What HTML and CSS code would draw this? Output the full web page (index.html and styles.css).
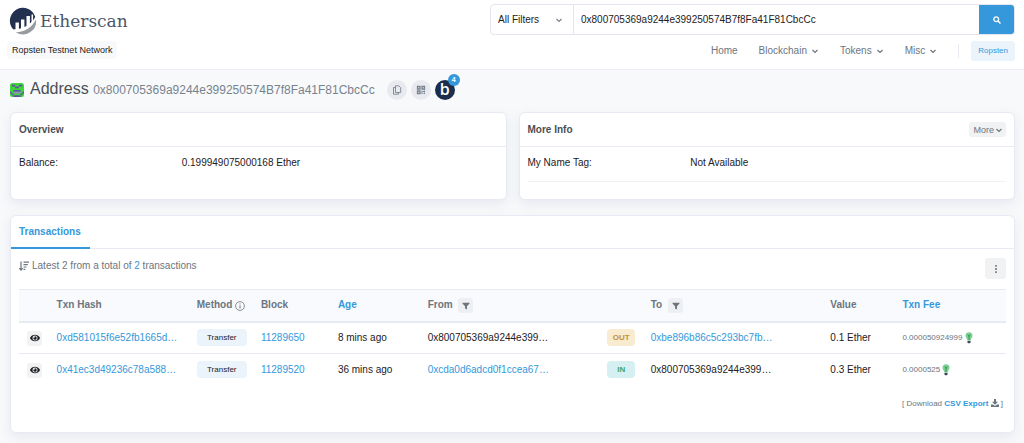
FILE: index.html
```html
<!DOCTYPE html>
<html lang="en">
<head>
<meta charset="utf-8">
<meta name="viewport" content="width=device-width, initial-scale=1">
<title>Etherscan - Address</title>
<link rel="stylesheet" href="styles.css">
</head>
<body>
<svg class="sprite" aria-hidden="true">
  <symbol id="chevron" viewBox="0 0 8 8"><path d="M1.500 3 4 5.500 6.500 3" fill="none" stroke="currentColor" stroke-width="1.200"/></symbol>
  <symbol id="eye" viewBox="0 0 576 512"><path fill="currentColor" fill-rule="evenodd" d="M572 241C518 135 410 64 288 64S58 135 4 241a32 32 0 0 0 0 30c54 106 162 177 284 177s230-71 284-177a32 32 0 0 0 0-30zM288 400a144 144 0 1 1 0-288 144 144 0 0 1 0 288zm0-240a96 96 0 0 0-25 4 48 48 0 0 1-67 67 96 96 0 1 0 92-71z"/></symbol>
  <symbol id="filter" viewBox="0 0 10 10"><path fill="currentColor" d="M.6.8h8.800v1L6.200 5.200V9.500L3.800 8.200v-3L.6 1.800z"/></symbol>
  <symbol id="bulb" viewBox="0 0 8 12"><path fill="#7fcf95" d="M4 .3a3.500 3.500 0 0 1 3.500 3.500c0 1.900-1.500 2.600-1.800 4.400H2.300C2 6.400.5 5.700.5 3.800A3.500 3.500 0 0 1 4 .3z"/><path fill="none" stroke="#2f9e55" stroke-width="1" d="M4 8V4.200M2.800 2.500l1.200 2 1.200-2"/><path fill="#34495e" d="M2.500 8.800h3v1.400L4.700 11.300H3.300l-.8-1.100z"/></symbol>
</svg>

<header class="header">
  <div class="brand">
    <a class="logo" href="#">
      <svg class="logo-mark" viewBox="0 0 28 28" aria-hidden="true">
        <path fill="#21314f" d="M4.200 22.500A13 13 0 1 1 26.300 10c-4 7.500-12 12-22.100 12.500z"/>
        <path fill="#fff" d="M6.500 15.500h3.400V24H6.500zM12 12.500h3.400v10H12zM17.500 9h3.400v11h-3.400zM22.500 7.500h1.600v9h-1.600z"/>
        <path fill="none" stroke="#fff" stroke-width="1.500" d="M3.500 23.500C14 23.500 23 19 27.200 10.500"/>
        <path fill="#979a9e" d="M27 12.500A13.100 13.100 0 0 1 6.800 25.200C16 25 23 20.500 27 12.500z"/>
      </svg>
      <span>Etherscan</span>
    </a>
    <span class="network">Ropsten Testnet Network</span>
  </div>
  <div class="header-main">
    <form class="search">
      <div class="filter-box">
        <select class="filter-select" aria-label="Search filter"><option>All Filters</option></select>
        <svg class="icon-8" aria-hidden="true"><use href="#chevron"/></svg>
      </div>
      <input class="search-input" type="text" aria-label="Search" value="0x800705369a9244e399250574B7f8Fa41F81CbcCc">
      <button class="search-button" type="button" aria-label="Submit search">
        <svg class="icon-8" viewBox="0 0 8 8" aria-hidden="true"><circle cx="3.200" cy="3.200" r="2.400" fill="none" stroke="#fff" stroke-width="1.300"/><path d="M5 5l2.500 2.500" stroke="#fff" stroke-width="1.500"/></svg>
      </button>
    </form>
    <nav class="nav">
      <a href="#">Home</a>
      <a href="#">Blockchain <svg class="icon-8" aria-hidden="true"><use href="#chevron"/></svg></a>
      <a href="#">Tokens <svg class="icon-8" aria-hidden="true"><use href="#chevron"/></svg></a>
      <a href="#">Misc <svg class="icon-8" aria-hidden="true"><use href="#chevron"/></svg></a>
      <div class="nav-end"><span class="divider"></span><a class="nav-network" href="#">Ropsten</a></div>
    </nav>
  </div>
</header>

<main class="main">
  <div class="title">
    <svg class="identicon" viewBox="0 0 8 8" aria-hidden="true"><rect width="8" height="8" rx="1.500" fill="#3fd43a"/><path fill="#5b4fa8" d="M1 1h2v1H1zM5 1h2v1H5zM3 2h2v1H3zM0 5h1v1H0zM7 5h1v1H7zM2 4h4v1H2zM1 6h1v1H1zM6 6h1v1H6zM2 7h4v1H2z"/><path fill="#8d93b8" d="M2 5h4v1H2z"/></svg>
    <h1 class="title-text">Address <small class="address">0x800705369a9244e399250574B7f8Fa41F81CbcCc</small></h1>
    <div class="title-actions">
      <button class="round" type="button" aria-label="Copy address"><svg class="icon-10" viewBox="0 0 10 10" fill="none" stroke="#77838f" aria-hidden="true"><path d="M3.500.8h3.200l2 2v4.700H3.500zM3.500 2.500H1.500v6.700h5V7.500" stroke-width=".9"/></svg></button>
      <button class="round" type="button" aria-label="Show QR code"><svg class="icon-10" viewBox="0 0 10 10" fill="none" stroke="#77838f" aria-hidden="true"><path stroke-width="1.300" d="M1.500 1.500h2.500v2.500H1.500zM6 1.500h2.500v2.500H6zM1.500 6h2.500v2.500H1.500z"/><path d="M6 5.500v3.500M8.500 5.500v2M7 6.500h2M7.500 8.500H9"/></svg></button>
      <a class="blockscan" href="#">b<span class="badge">4</span></a>
    </div>
  </div>

  <div class="cards">
    <section class="card">
      <div class="card-header"><h2>Overview</h2></div>
      <dl class="card-body"><div class="pair"><dt>Balance:</dt><dd>0.199949075000168 Ether</dd></div></dl>
    </section>
    <section class="card">
      <div class="card-header"><h2>More Info</h2><button class="more" type="button">More <svg class="icon-8" aria-hidden="true"><use href="#chevron"/></svg></button></div>
      <dl class="card-body"><div class="pair pair-ruled"><dt>My Name Tag:</dt><dd>Not Available</dd></div></dl>
    </section>
  </div>

  <section class="card">
    <div class="tabs"><a class="tab" href="#">Transactions</a></div>
    <div class="tx-body">
      <div class="tx-summary">
        <p class="tx-count"><svg class="icon-10" viewBox="0 0 10 10" fill="none" stroke="currentColor" aria-hidden="true"><path d="M2 .5v8.500M.4 7.200 2 9l1.600-1.800M4.500 1.200H10M4.500 3.600h4.300M4.500 6h3M4.500 8.400h1.700" stroke-width="1.200"/></svg>Latest 2 from a total of <a href="#">2</a> transactions</p>
        <button class="menu" type="button" aria-label="Table options"><svg class="icon-8" viewBox="0 0 8 8" fill="currentColor" aria-hidden="true"><path d="M3.200 0h1.600v1.800H3.200zM3.200 3.100h1.600v1.800H3.200zM3.200 6.200h1.600V8H3.200z"/></svg></button>
      </div>
      <table class="table">
        <colgroup><col class="c-view"><col class="c-hash"><col class="c-method"><col class="c-block"><col class="c-age"><col class="c-address"><col class="c-direction"><col class="c-address"><col class="c-value"><col></colgroup>
        <thead><tr>
          <th></th><th>Txn Hash</th>
          <th>Method <svg class="icon-10" viewBox="0 0 10 10" fill="none" stroke="currentColor" aria-hidden="true"><circle cx="5" cy="5" r="4.400" stroke-width=".8"/><path d="M5 4.300v3.200M5 2.400v1"/></svg></th>
          <th>Block</th><th><a href="#">Age</a></th>
          <th>From <button class="tool" type="button" aria-label="Filter by sender"><svg class="icon-8" aria-hidden="true"><use href="#filter"/></svg></button></th>
          <th></th>
          <th>To <button class="tool" type="button" aria-label="Filter by recipient"><svg class="icon-8" aria-hidden="true"><use href="#filter"/></svg></button></th>
          <th>Value</th><th><a href="#">Txn Fee</a></th>
        </tr></thead>
        <tbody>
          <tr>
            <td><button class="tool tool-dark" type="button" aria-label="View transaction"><svg class="icon-10" aria-hidden="true"><use href="#eye"/></svg></button></td>
            <td><a href="#">0xd581015f6e52fb1665d…</a></td><td><span class="tag tag-method">Transfer</span></td>
            <td><a href="#">11289650</a></td><td>8 mins ago</td><td>0x800705369a9244e399…</td>
            <td><span class="tag tag-out">OUT</span></td><td><a href="#">0xbe896b86c5c293bc7fb…</a></td>
            <td>0.1 Ether</td><td class="fee">0.000050924999 <svg class="bulb" aria-hidden="true"><use href="#bulb"/></svg></td>
          </tr>
          <tr>
            <td><button class="tool tool-dark" type="button" aria-label="View transaction"><svg class="icon-10" aria-hidden="true"><use href="#eye"/></svg></button></td>
            <td><a href="#">0x41ec3d49236c78a588…</a></td><td><span class="tag tag-method">Transfer</span></td>
            <td><a href="#">11289520</a></td><td>36 mins ago</td><td><a href="#">0xcda0d6adcd0f1ccea67…</a></td>
            <td><span class="tag tag-in">IN</span></td><td>0x800705369a9244e399…</td>
            <td>0.3 Ether</td><td class="fee">0.0000525 <svg class="bulb" aria-hidden="true"><use href="#bulb"/></svg></td>
          </tr>
        </tbody>
      </table>
      <p class="export">[ Download <a href="#">CSV Export</a> <svg class="icon-8" viewBox="0 0 8 8" aria-hidden="true"><path fill="currentColor" d="M3 0h2v2.800h2L4 5.800 1 2.800h2zM0 5.500h2l2 1.600 2-1.600h2V8H0z"/></svg> ]</p>
    </div>
  </section>
</main>
</body>
</html>
```
FILE: styles.css
```css
* { box-sizing: border-box; }
body {
  margin: 0;
  background: #f8f9fa;
  color: #1e2022;
  font: 10px/16px "Liberation Sans", Arial, sans-serif;
}
a { color: #3498db; text-decoration: none; }
h1, h2, p, dl, dd { margin: 0; }
button, input, select { font: inherit; color: inherit; border: 0; padding: 0; }
.sprite { display: none; }
.icon-8 { width: 8px; height: 8px; }
.icon-10 { width: 10px; height: 10px; }

.header {
  display: flex;
  justify-content: space-between;
  height: 70px;
  padding: 4px 9px 0 7px;
  background: #fff;
  border-bottom: 1px solid #eceef4;
}
.brand { display: flex; flex-direction: column; align-items: flex-start; gap: 3px; }
.logo {
  display: flex;
  align-items: center;
  gap: 3px;
  height: 34px;
  padding-left: 2px;
  color: #4b5668;
  font: 17px/24px "DejaVu Serif", serif;
}
.logo-mark { width: 28px; height: 28px; }
.network {
  padding: 1px 5px;
  border-radius: 4px;
  background: #f8f9fa;
  font-size: 9px;
}
.header-main { width: 525px; }
.search {
  display: flex;
  height: 31px;
  border: 1px solid #e3e6f0;
  border-radius: 4px;
  overflow: hidden;
}
.filter-box {
  display: flex;
  align-items: center;
  width: 83px;
  padding: 0 10px 0 7px;
  border-right: 1px solid #e3e6f0;
  color: #77838f;
}
.filter-select { flex: 1; appearance: none; background: none; color: #1e2022; }
.search-input { flex: 1; min-width: 0; padding: 0 7px; }
.search-button {
  display: grid;
  place-items: center;
  width: 35px;
  background: #3498db;
}
.nav {
  display: flex;
  justify-content: flex-end;
  align-items: center;
  gap: 21px;
  padding-top: 6px;
}
.nav a { display: flex; align-items: center; gap: 4px; color: #6c757e; }
.nav-end { display: flex; align-items: center; gap: 12px; }
.divider { width: 1px; height: 14px; background: #e7eaf3; }
.nav .nav-network {
  height: 20px;
  padding: 0 7px;
  border-radius: 3px;
  background: #ebf4fb;
  color: #3498db;
  font-size: 8px;
}

.main { display: flex; flex-direction: column; gap: 15px; padding: 6px 9px 10px 10px; }
.title { display: flex; align-items: center; height: 27px; }
.identicon { width: 14px; height: 14px; margin-right: 6px; }
.title-text { color: #4a4f55; font-size: 16px; font-weight: 400; }
.address { color: #77838f; font-size: 12px; }
.title-actions { display: flex; gap: 4px; margin-left: 12px; }
.round {
  display: grid;
  place-items: center;
  width: 20px;
  height: 20px;
  border-radius: 50%;
  background: #e9eaef;
}
.blockscan {
  position: relative;
  width: 20px;
  height: 20px;
  border-radius: 50%;
  background: #1b2e4b;
  color: #fff;
  font: 600 16px/18px "Open Sans", sans-serif;
  text-align: center;
}
.badge {
  position: absolute;
  top: -6px;
  right: -5px;
  width: 12px;
  height: 12px;
  border-radius: 50%;
  background: #3498db;
  font: bold 7px/12px "Liberation Sans", Arial, sans-serif;
}

.cards { display: grid; grid-template-columns: 1fr 1fr; gap: 12px; margin-top: -6px; }
.card {
  border: 1px solid #e7eaf3;
  border-radius: 6px;
  background: #fff;
  box-shadow: 0 4px 12px rgba(140, 152, 190, 0.16);
}
.card-header {
  display: flex;
  align-items: center;
  justify-content: space-between;
  height: 34px;
  padding: 0 8px;
  border-bottom: 1px solid #e7eaf3;
}
.card h2 { font-size: 10px; color: #4a4f55; }
.more {
  display: flex;
  align-items: center;
  gap: 1px;
  height: 15px;
  padding: 0 3px 0 4px;
  border-radius: 3px;
  background: #f1f2f4;
  color: #6c757e;
  font-size: 9px;
}
.card-body { padding: 8px 8px 17px; }
.pair { display: grid; grid-template-columns: 34% 1fr; height: 27px; }
.pair-ruled { border-bottom: 1px solid #f0f2f8; }

.tabs { display: flex; height: 33px; border-bottom: 1px solid #e7eaf3; }
.tab { height: 33px; padding: 8px 9px 0 8px; border-bottom: 2px solid #3498db; font-weight: 700; }
.tx-body { padding: 9px 8px 20px; }
.tx-summary {
  display: flex;
  align-items: flex-start;
  justify-content: space-between;
  margin-bottom: 10px;
  color: #6c757e;
}
.tx-count .icon-10 { margin-right: 3px; vertical-align: middle; }
.menu { display: grid; place-items: center; width: 21px; height: 21px; border-radius: 3px; background: #f1f2f4; }
.table { width: 100%; table-layout: fixed; border-collapse: collapse; }
.table th, .table td { height: 32px; padding: 0 0 0 8px; text-align: left; white-space: nowrap; }
.table th {
  background: #f8fafd;
  border-top: 1px solid #e7eaf3;
  border-bottom: 2px solid #e7eaf3;
  color: #6c757e;
}
.table tbody tr + tr td { border-top: 1px solid #e7eaf3; }
.table th .icon-10 { vertical-align: middle; }
.c-view { width: 3%; }
.c-hash { width: 14.2%; }
.c-method { width: 6.5%; }
.c-block { width: 7.8%; }
.c-age { width: 9.1%; }
.c-address { width: 18.2%; }
.c-direction { width: 4.4%; }
.c-value { width: 7.3%; }
.tool {
  display: inline-grid;
  place-items: center;
  width: 15px;
  height: 15px;
  margin-left: 3px;
  border-radius: 3px;
  background: #eeeff2;
  color: #6c757e;
  vertical-align: middle;
}
.tool-dark { margin-left: 0; color: #1e2022; background: #f1f2f4; }
.tag {
  display: block;
  height: 17px;
  border-radius: 4px;
  font-size: 8px;
  line-height: 17px;
  text-align: center;
}
.tag-method { width: 50px; background: #ebf4fb; }
.tag-out, .tag-in { width: 28px; font-weight: 700; }
.tag-out { background: #f8ebd0; color: #c2913b; }
.tag-in { background: #d6eff3; color: #3fa66a; }
.table .fee, .export { color: #6c757e; font-size: 8px; }
.bulb { width: 8px; height: 12px; vertical-align: middle; }
.export { padding: 10px 3px 0; text-align: right; }
.export a { font-weight: 700; }
.export .icon-8 { vertical-align: middle; }
```
